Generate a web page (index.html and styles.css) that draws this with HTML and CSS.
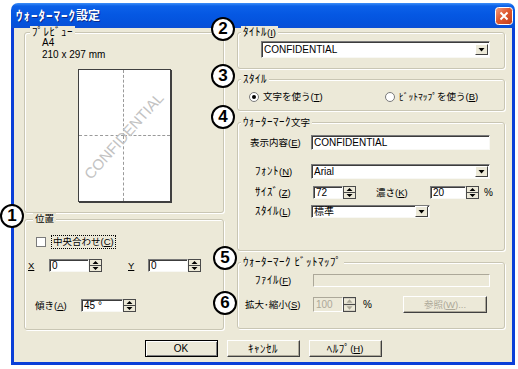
FILE: index.html
```html
<!DOCTYPE html>
<html lang="ja">
  <head>
    <meta charset="UTF-8" />
    <title>ウォーターマーク設定</title>
    <link rel="stylesheet" href="styles.css">
  </head>

  <body>
    <div class="window">
      <div class="titlebar">
        <span class="title"><span class="hk">ｳｫｰﾀｰﾏｰｸ</span>設定</span>
        <span class="close-btn">
          <svg width="18" height="18" viewBox="0 0 18 18">
            <defs>
              <linearGradient id="cg" x1="0" y1="0" x2="1" y2="1">
                <stop offset="0" stop-color="#f3a184" />
                <stop offset="0.45" stop-color="#e05a31" />
                <stop offset="1" stop-color="#c23d19" />
              </linearGradient>
            </defs>
            <rect x="0.5" y="0.5" width="17" height="17" rx="3" fill="url(#cg)" stroke="#fff" />
            <path d="M5.5 5.5l7 7M12.5 5.5l-7 7" stroke="#fff" stroke-width="2" />
          </svg>
        </span>
      </div>

      <div class="client">
        <div class="columns">
          <div class="col-left">
            <div class="group preview-group">
              <span class="group-title"><span class="hk">ﾌﾟﾚﾋﾞｭｰ</span></span>
              <div class="paper-info">A4<br />210 x 297 mm</div>
              <div class="page">
                <div class="cell"></div>
                <div class="cell"></div>
                <div class="cell"></div>
                <div class="cell"></div>
                <span class="watermark">CONFIDENTIAL</span>
              </div>
            </div>

            <div class="group position-group">
              <span class="group-title">位置</span>
              <div class="check-row">
                <span class="checkbox"></span>
                <span class="focus-label">中央合わせ(<u>C</u>)</span>
              </div>
              <div class="row xy-row">
                <span class="lbl lbl-x"><u>X</u></span>
                <div class="field w40">0</div>
                <span class="spin"><svg viewBox="0 0 13 13" preserveAspectRatio="none"><rect x="0.5" y="0.5" width="12" height="12" fill="#ece9d8" stroke="#4a4a4a" /><path d="M1 6.5h11" stroke="#4a4a4a" /><path d="M3.5 5h6l-3-3z M3.5 8h6l-3 3z" /></svg></span>
                <span class="lbl lbl-y"><u>Y</u></span>
                <div class="field w40">0</div>
                <span class="spin"><svg viewBox="0 0 13 13" preserveAspectRatio="none"><rect x="0.5" y="0.5" width="12" height="12" fill="#ece9d8" stroke="#4a4a4a" /><path d="M1 6.5h11" stroke="#4a4a4a" /><path d="M3.5 5h6l-3-3z M3.5 8h6l-3 3z" /></svg></span>
              </div>
              <div class="row tilt-row">
                <span class="lbl lbl-tilt">傾き(<u>A</u>)</span>
                <div class="field w42">45 °</div>
                <span class="spin"><svg viewBox="0 0 13 13" preserveAspectRatio="none"><rect x="0.5" y="0.5" width="12" height="12" fill="#ece9d8" stroke="#4a4a4a" /><path d="M1 6.5h11" stroke="#4a4a4a" /><path d="M3.5 5h6l-3-3z M3.5 8h6l-3 3z" /></svg></span>
              </div>
            </div>
          </div>

          <div class="col-right">
            <div class="group title-group">
              <span class="group-title"><span class="hk">ﾀｲﾄﾙ</span>(<u>I</u>)</span>
              <div class="field combo combo-title">
                <span>CONFIDENTIAL</span>
                <span class="combo-btn"><svg width="11" height="11" viewBox="0 0 11 11"><path d="M2.5 4h6l-3 3.5z" /></svg></span>
              </div>
            </div>

            <div class="group style-group">
              <span class="group-title"><span class="hk">ｽﾀｲﾙ</span></span>
              <div class="row radio-row">
                <span class="radio-opt opt-text"><span class="radio on"></span>文字を使う(<u>T</u>)</span>
                <span class="radio-opt"><span class="radio"></span>ﾋﾞｯﾄﾏｯﾌﾟを使う(<u>B</u>)</span>
              </div>
            </div>

            <div class="group text-group">
              <span class="group-title"><span class="hk">ｳｫｰﾀｰﾏｰｸ</span>文字</span>
              <div class="row r-content">
                <span class="lbl lbl-content">表示内容(<u>E</u>)</span>
                <div class="field w179">CONFIDENTIAL</div>
              </div>
              <div class="row r-font">
                <span class="lbl lbl-font"><span class="hk">ﾌｫﾝﾄ</span>(<u>N</u>)</span>
                <div class="field combo w179">
                  <span>Arial</span>
                  <span class="combo-btn"><svg width="11" height="11" viewBox="0 0 11 11"><path d="M2.5 4h6l-3 3.5z" /></svg></span>
                </div>
              </div>
              <div class="row r-size">
                <span class="lbl lbl-size"><span class="hk">ｻｲｽﾞ</span>(<u>Z</u>)</span>
                <div class="field w30">72</div>
                <span class="spin"><svg viewBox="0 0 13 13" preserveAspectRatio="none"><rect x="0.5" y="0.5" width="12" height="12" fill="#ece9d8" stroke="#4a4a4a" /><path d="M1 6.5h11" stroke="#4a4a4a" /><path d="M3.5 5h6l-3-3z M3.5 8h6l-3 3z" /></svg></span>
                <span class="lbl lbl-density">濃さ(<u>K</u>)</span>
                <div class="field w36">20</div>
                <span class="spin"><svg viewBox="0 0 13 13" preserveAspectRatio="none"><rect x="0.5" y="0.5" width="12" height="12" fill="#ece9d8" stroke="#4a4a4a" /><path d="M1 6.5h11" stroke="#4a4a4a" /><path d="M3.5 5h6l-3-3z M3.5 8h6l-3 3z" /></svg></span>
                <span class="pct">%</span>
              </div>
              <div class="row r-style">
                <span class="lbl lbl-style"><span class="hk">ｽﾀｲﾙ</span>(<u>L</u>)</span>
                <div class="field combo w119">
                  <span>標準</span>
                  <span class="combo-btn"><svg width="11" height="11" viewBox="0 0 11 11"><path d="M2.5 4h6l-3 3.5z" /></svg></span>
                </div>
              </div>
            </div>

            <div class="group bitmap-group">
              <span class="group-title"><span class="hk">ｳｫｰﾀｰﾏｰｸ ﾋﾞｯﾄﾏｯﾌﾟ</span></span>
              <div class="row r-file">
                <span class="lbl lbl-file"><span class="hk">ﾌｧｲﾙ</span>(<u>F</u>)</span>
                <div class="field disabled w177"></div>
              </div>
              <div class="row r-scale">
                <span class="lbl lbl-scale">拡大･縮小(<u>S</u>)</span>
                <div class="field disabled w30 h15">100</div>
                <span class="spin h15"><svg viewBox="0 0 13 13" preserveAspectRatio="none"><rect x="0.5" y="0.5" width="12" height="12" fill="#ece9d8" stroke="#4a4a4a" /><path d="M1 6.5h11" stroke="#4a4a4a" /><path d="M3.5 5h6l-3-3z M3.5 8h6l-3 3z" fill="#aca899" /></svg></span>
                <span class="pct pct-scale">%</span>
                <div class="btn btn-browse disabled">参照(<u>W</u>)...</div>
              </div>
            </div>
          </div>
        </div>

        <div class="buttons">
          <div class="btn btn-default">OK</div>
          <div class="btn"><span class="hk">ｷｬﾝｾﾙ</span></div>
          <div class="btn"><span class="hk">ﾍﾙﾌﾟ</span>(<u>H</u>)</div>
        </div>
      </div>

      <span class="callout c1">1</span>
      <span class="callout c2">2</span>
      <span class="callout c3">3</span>
      <span class="callout c4">4</span>
      <span class="callout c5">5</span>
      <span class="callout c6">6</span>
    </div>
  </body>
</html>
```

FILE: styles.css
```css
* {
  box-sizing: border-box;
}

body {
  margin: 0;
  background: #fff;
  font-family: "Liberation Sans", "Noto Sans CJK JP", sans-serif;
  font-size: 10px;
  line-height: 12px;
  color: #000;
}

/* half-width katakana are drawn a bit wider, like the old UI font */
.hk {
  font-size: 11px;
  letter-spacing: 0.5px;
}

/* window frame */

.window {
  position: relative;
  width: 504px;
  height: 362px;
  margin: 3px 0 0 11px;
}

.titlebar {
  display: flex;
  align-items: center;
  justify-content: space-between;
  height: 25px;
  padding: 0 2px 0 5px;
  border-radius: 7px 7px 0 0;
  background: linear-gradient(#3d8ff8 0, #0c61e8 3px, #0558e3 45%, #0452dc 80%, #0a4fd6 100%);
}

.title {
  color: #fff;
  font-weight: bold;
  font-size: 12px;
  text-shadow: 1px 1px 0 #0a2a8c;
}

.title .hk {
  font-size: 13px;
  letter-spacing: 1px;
}

.close-btn svg {
  display: block;
}

.client {
  height: 337px;
  background: #ece9d8;
  border: 3px solid #0a3fd8;
  border-top: 0;
}

.columns {
  display: flex;
}

.col-left {
  width: 210px;
  padding: 4px 0 0 10px;
}

.col-right {
  width: 268px;
  margin-left: 13px;
  padding-top: 4px;
}

/* group boxes */

.group {
  border: 1px solid #c9c6b4;
  border-radius: 3px;
  box-shadow: inset 1px 1px 0 #fff, 1px 1px 0 #fff;
}

.group-title,
.lbl,
.radio-opt,
.focus-label,
.btn {
  font-size: 9.5px;
}

.group-title {
  display: table;
  height: 12px;
  margin: -7px 0 0 5px;
  padding: 0 2px;
  background: #ece9d8;
}

.col-right .group-title {
  margin-left: 3px;
}

.preview-group {
  height: 181px;
}

.paper-info {
  margin: -2px 0 0 17px;
}

.page {
  position: relative;
  display: grid;
  grid-template-columns: 1fr 1fr;
  grid-template-rows: 1fr 1fr;
  width: 93px;
  height: 133px;
  margin: 8px auto 0;
  background: #fff;
  border: 1px solid #404040;
  box-shadow: 1px 1px 0 #404040;
  overflow: hidden;
}

.cell:nth-child(1) {
  border-right: 1px dashed #9a9a9a;
  border-bottom: 1px dashed #9a9a9a;
}

.cell:nth-child(2) {
  border-bottom: 1px dashed #9a9a9a;
}

.cell:nth-child(3) {
  border-right: 1px dashed #9a9a9a;
}

.watermark {
  position: absolute;
  left: 50%;
  top: 50%;
  transform: translate(-50%, -50%) rotate(-48deg);
  font-size: 15px;
  color: #c2c2c2;
  white-space: nowrap;
}

.position-group {
  height: 111px;
  margin-top: 6px;
  padding-left: 3px;
}

.check-row {
  display: flex;
  align-items: center;
  height: 13px;
  margin: 10px 0 0 8px;
}

.checkbox {
  width: 10px;
  height: 10px;
  background: #fff;
  border: 1px solid #7a7a7a;
}

.focus-label {
  margin-left: 6px;
  padding: 0 1px;
  outline: 1px dotted #000;
}

/* rows and fields */

.row {
  display: flex;
  align-items: center;
}

.lbl {
  flex: none;
  white-space: nowrap;
}

.xy-row {
  height: 13px;
  margin-top: 11px;
}

.lbl-x {
  width: 21px;
}

.lbl-y {
  width: 20px;
  margin-left: 26px;
}

.tilt-row {
  height: 13px;
  margin-top: 27px;
}

.lbl-tilt {
  width: 46px;
  margin-left: 7px;
}

.field {
  display: flex;
  align-items: center;
  flex: none;
  height: 100%;
  padding-left: 2px;
  background: #fff;
  border: 1px solid;
  border-color: #7a7a7a #f8f8f4 #f8f8f4 #7a7a7a;
  box-shadow: inset 1px 1px 0 #3c3c3c;
  white-space: nowrap;
  overflow: hidden;
}

.field.disabled {
  background: #ece9d8;
  color: #aca899;
  border-color: #aca899 #fff #fff #aca899;
  box-shadow: none;
}

.combo {
  justify-content: space-between;
  padding-right: 1px;
}

.combo-btn {
  display: flex;
  align-items: center;
  justify-content: center;
  width: 13px;
  height: 11px;
  background: #ece9d8;
  border: 1px solid;
  border-color: #fff #404040 #404040 #fff;
}

.combo-btn svg {
  display: block;
}

.spin {
  flex: none;
  width: 13px;
  height: 13px;
}

.spin svg {
  display: block;
  width: 13px;
  height: 100%;
}

.h15 {
  height: 15px;
}

.w30 { width: 30px; }
.w36 { width: 36px; }
.w40 { width: 40px; }
.w42 { width: 42px; }
.w119 { width: 119px; }
.w177 { width: 177px; }
.w179 { width: 179px; }

.title-group {
  height: 37px;
}

.combo-title {
  width: 229px;
  height: 17px;
  margin: 2px 0 0 23px;
}

.style-group {
  height: 32px;
  margin-top: 10px;
}

.radio-row {
  height: 12px;
  margin: 5px 0 0 11px;
}

.radio-opt {
  display: flex;
  align-items: center;
}

.opt-text {
  width: 136px;
}

.radio {
  display: flex;
  align-items: center;
  justify-content: center;
  width: 10px;
  height: 10px;
  margin-right: 4px;
  border: 1px solid #7a7a7a;
  border-radius: 50%;
  background: #fff;
}

.radio.on::after {
  content: "";
  width: 4px;
  height: 4px;
  border-radius: 50%;
  background: #000;
}

.text-group {
  height: 129px;
  margin-top: 11px;
}

.r-content {
  height: 15px;
  margin: 6px 0 0 12px;
}

.lbl-content {
  width: 61px;
}

.r-font {
  height: 15px;
  margin: 14px 0 0 17px;
}

.lbl-font,
.lbl-style {
  width: 56px;
}

.r-size {
  height: 13px;
  margin: 7px 0 0 17px;
}

.lbl-size,
.lbl-file {
  width: 58px;
}

.lbl-density {
  width: 54px;
  margin-left: 20px;
}

.pct {
  margin-left: 5px;
}

.r-style {
  height: 13px;
  margin: 6px 0 0 17px;
}

.bitmap-group {
  height: 67px;
  margin-top: 11px;
}

.r-file {
  height: 13px;
  margin: 5px 0 0 17px;
}

.r-scale {
  height: 17px;
  margin: 9px 0 0 7px;
}

.lbl-scale {
  width: 68px;
}

.pct-scale {
  margin-left: 7px;
}

/* push buttons */

.btn {
  display: flex;
  align-items: center;
  justify-content: center;
  width: 73px;
  height: 17px;
  background: #ece9d8;
  border: 1px solid;
  border-color: #fff #404040 #404040 #fff;
  box-shadow: inset -1px -1px 0 #aca899;
}

.btn-default {
  font-size: 10px;
  border-color: #000;
  box-shadow: inset 1px 1px 0 #fff, inset -1px -1px 0 #808080;
}

.btn.disabled {
  color: #aca899;
}

.btn-browse {
  width: 84px;
  margin: 0 17px 0 auto;
}

.buttons {
  display: flex;
  justify-content: center;
  gap: 9px;
  margin-top: 10px;
}

/* numbered callouts */

.callout {
  position: absolute;
  display: flex;
  align-items: center;
  justify-content: center;
  width: 24px;
  height: 24px;
  border: 2.5px solid #000;
  border-radius: 50%;
  background: #fff;
  font-family: "Liberation Sans", sans-serif;
  font-weight: bold;
  font-size: 17px;
}

.c1 { left: -11px; top: 201px; }
.c2 { left: 200px; top: 14px; }
.c3 { left: 200px; top: 61px; }
.c4 { left: 200px; top: 102px; }
.c5 { left: 202px; top: 243px; }
.c6 { left: 202px; top: 288px; }
```
